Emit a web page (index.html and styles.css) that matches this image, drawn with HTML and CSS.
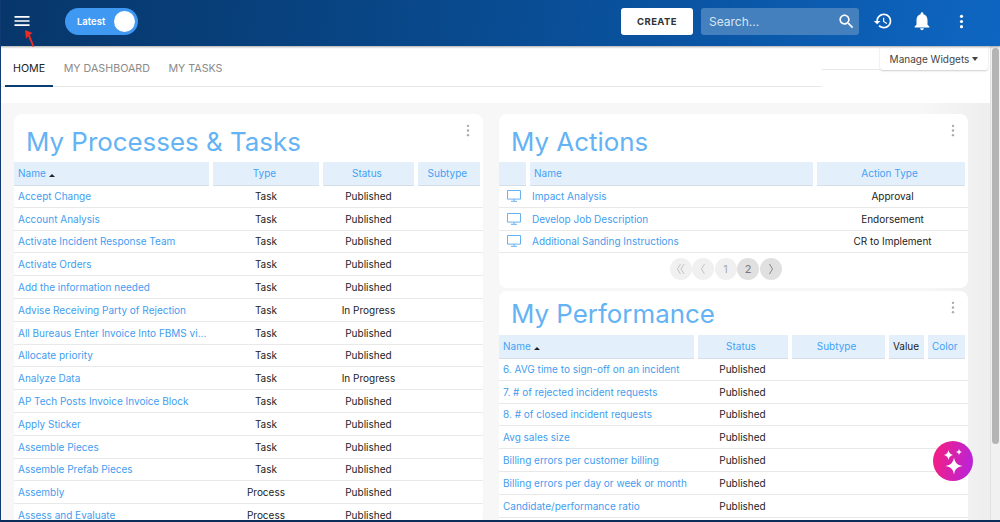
FILE: index.html
```html
<!DOCTYPE html>
<html lang="en">
<head>
<meta charset="utf-8">
<title>Home</title>
<link rel="stylesheet" href="styles.css">
</head>
<body>
<div class="frame">
  <header class="topbar">
    <svg class="icon menu" viewBox="0 0 24 24"><path d="M3 18h18v-2H3v2zm0-5h18v-2H3v2zm0-7v2h18V6H3z"/></svg>
    <div class="toggle"><span>Latest</span><i></i></div>
    <div class="spacer"></div>
    <button class="create">CREATE</button>
    <div class="search"><span>Search...</span><svg class="icon" viewBox="0 0 24 24"><path d="M15.5 14h-.79l-.28-.27C15.41 12.59 16 11.11 16 9.5 16 5.91 13.09 3 9.5 3S3 5.91 3 9.5 5.91 16 9.5 16c1.61 0 3.09-.59 4.23-1.57l.27.28v.79l5 4.99L20.49 19l-4.99-5zm-6 0C7.01 14 5 11.99 5 9.5S7.01 5 9.5 5 14 7.01 14 9.5 11.99 14 9.5 14z"/></svg></div>
    <svg class="icon history" viewBox="0 0 24 24"><path d="M13 3c-4.97 0-9 4.03-9 9H1l3.89 3.89.07.14L9 12H6c0-3.87 3.13-7 7-7s7 3.13 7 7-3.13 7-7 7c-1.93 0-3.68-.79-4.94-2.06l-1.42 1.42C8.27 19.99 10.51 21 13 21c4.97 0 9-4.03 9-9s-4.03-9-9-9zm-1 5v5l4.28 2.54.72-1.21-3.5-2.08V8H12z"/></svg>
    <svg class="icon bell" viewBox="0 0 24 24"><path d="M12 22c1.1 0 2-.9 2-2h-4c0 1.1.89 2 2 2zm6-6v-5c0-3.07-1.64-5.64-4.5-6.32V4c0-.83-.67-1.5-1.5-1.5s-1.5.67-1.5 1.5v.68C7.63 5.36 6 7.92 6 11v5l-2 2v1h16v-1l-2-2z"/></svg>
    <svg class="icon dots" viewBox="0 0 24 24"><circle cx="12" cy="5.5" r="2"/><circle cx="12" cy="12" r="2"/><circle cx="12" cy="18.5" r="2"/></svg>
  </header>
  <svg class="arrow" viewBox="0 0 13 18"><path d="M2 1l7.700 3-2.900 1.800L11.300 17.300l-1.500.7L5 7.100 3 10z"/></svg>
  <div class="main">
    <div class="content">
      <div class="tabsbar">
        <nav class="tabs">
          <a class="tab active">HOME</a>
          <a class="tab">MY DASHBOARD</a>
          <a class="tab">MY TASKS</a>
        </nav>
        <div class="manage">Manage Widgets<b></b></div>
      </div>
      <div class="widgets">
        <section class="card left">
          <svg class="kebab" viewBox="0 0 4 14"><circle cx="2" cy="2" r="1.3"/><circle cx="2" cy="7" r="1.3"/><circle cx="2" cy="12" r="1.3"/></svg>
          <h2>My Processes &amp; Tasks</h2>
          <div class="row head cols-proc"><div>Name<em></em></div><div class="c">Type</div><div class="c">Status</div><div class="c">Subtype</div></div>
          <div class="row cols-proc"><a>Accept Change</a><span class="c">Task</span><span class="c">Published</span></div>
          <div class="row cols-proc"><a>Account Analysis</a><span class="c">Task</span><span class="c">Published</span></div>
          <div class="row cols-proc"><a>Activate Incident Response Team</a><span class="c">Task</span><span class="c">Published</span></div>
          <div class="row cols-proc"><a>Activate Orders</a><span class="c">Task</span><span class="c">Published</span></div>
          <div class="row cols-proc"><a>Add the information needed</a><span class="c">Task</span><span class="c">Published</span></div>
          <div class="row cols-proc"><a>Advise Receiving Party of Rejection</a><span class="c">Task</span><span class="c">In Progress</span></div>
          <div class="row cols-proc"><a>All Bureaus Enter Invoice Into FBMS vi...</a><span class="c">Task</span><span class="c">Published</span></div>
          <div class="row cols-proc"><a>Allocate priority</a><span class="c">Task</span><span class="c">Published</span></div>
          <div class="row cols-proc"><a>Analyze Data</a><span class="c">Task</span><span class="c">In Progress</span></div>
          <div class="row cols-proc"><a>AP Tech Posts Invoice Invoice Block</a><span class="c">Task</span><span class="c">Published</span></div>
          <div class="row cols-proc"><a>Apply Sticker</a><span class="c">Task</span><span class="c">Published</span></div>
          <div class="row cols-proc"><a>Assemble Pieces</a><span class="c">Task</span><span class="c">Published</span></div>
          <div class="row cols-proc"><a>Assemble Prefab Pieces</a><span class="c">Task</span><span class="c">Published</span></div>
          <div class="row cols-proc"><a>Assembly</a><span class="c">Process</span><span class="c">Published</span></div>
          <div class="row cols-proc"><a>Assess and Evaluate</a><span class="c">Process</span><span class="c">Published</span></div>
        </section>
        <div class="stack">
          <section class="card actions">
            <svg class="kebab" viewBox="0 0 4 14"><circle cx="2" cy="2" r="1.3"/><circle cx="2" cy="7" r="1.3"/><circle cx="2" cy="12" r="1.3"/></svg>
            <h2>My Actions</h2>
            <div class="row head cols-act"><div></div><div>Name</div><div class="c">Action Type</div></div>
            <div class="row cols-act"><svg class="screen" viewBox="0 0 14 12"><path d="M.5.5h13v8.600H.5zM7 9.100v2M4 11.300h6"/></svg><a>Impact Analysis</a><span class="c">Approval</span></div>
            <div class="row cols-act"><svg class="screen" viewBox="0 0 14 12"><path d="M.5.5h13v8.600H.5zM7 9.100v2M4 11.300h6"/></svg><a>Develop Job Description</a><span class="c">Endorsement</span></div>
            <div class="row cols-act"><svg class="screen" viewBox="0 0 14 12"><path d="M.5.5h13v8.600H.5zM7 9.100v2M4 11.300h6"/></svg><a>Additional Sanding Instructions</a><span class="c">CR to Implement</span></div>
            <div class="pager">
              <span class="pg"><svg viewBox="0 0 10 12"><path d="M4.500 1 1.500 6l3 5M8 1 5 6l3 5"/></svg></span>
              <span class="pg"><svg viewBox="0 0 10 12"><path d="M6.500 1 3.500 6l3 5"/></svg></span>
              <span class="pg">1</span>
              <span class="pg on">2</span>
              <span class="pg on"><svg viewBox="0 0 10 12"><path d="M3.500 1 6.500 6l-3 5"/></svg></span>
            </div>
          </section>
          <section class="card perf">
            <svg class="kebab" viewBox="0 0 4 14"><circle cx="2" cy="2" r="1.3"/><circle cx="2" cy="7" r="1.3"/><circle cx="2" cy="12" r="1.3"/></svg>
            <h2>My Performance</h2>
            <div class="row head cols-perf"><div>Name<em></em></div><div class="c">Status</div><div class="c">Subtype</div><div class="c dark">Value</div><div class="c">Color</div></div>
            <div class="row cols-perf"><a>6. AVG time to sign-off on an incident</a><span class="c">Published</span></div>
            <div class="row cols-perf"><a>7. # of rejected incident requests</a><span class="c">Published</span></div>
            <div class="row cols-perf"><a>8. # of closed incident requests</a><span class="c">Published</span></div>
            <div class="row cols-perf"><a>Avg sales size</a><span class="c">Published</span></div>
            <div class="row cols-perf"><a>Billing errors per customer billing</a><span class="c">Published</span></div>
            <div class="row cols-perf"><a>Billing errors per day or week or month</a><span class="c">Published</span></div>
            <div class="row cols-perf"><a>Candidate/performance ratio</a><span class="c">Published</span></div>
          </section>
        </div>
      </div>
    </div>
    <div class="scrollbar"><i></i></div>
  </div>
  <button class="ai" aria-label="AI assistant"><svg viewBox="0 0 40 40"><path d="M21 16.500c.9 5 3 7.500 8.500 8.500-5.500 1-7.600 3.300-8.500 8.500-.9-5.200-3-7.500-8.500-8.500 5.500-1 7.600-3.500 8.500-8.500z"/><path d="M15.500 9c.6 3 1.700 4.300 4.500 5-2.800.7-3.900 2-4.500 5-.6-3-1.700-4.300-4.500-5 2.800-.7 3.900-2 4.500-5z"/><path d="M26 7.700c.3 2 1.100 2.800 3 3.300-1.900.5-2.700 1.300-3 3.300-.3-2-1.100-2.800-3-3.300 1.900-.5 2.700-1.300 3-3.300z"/></svg></button>
</div>
</body>
</html>
```

FILE: styles.css
```css
* { box-sizing: border-box; }
html, body { margin: 0; height: 100%; overflow: hidden; }
body { font-family: Inter, "Liberation Sans", sans-serif; font-size: 10px; color: #222; }
.frame { position: relative; height: 522px; border-left: 1px solid #123b73; border-bottom: 2px solid #0c2c5a; display: flex; flex-direction: column; overflow: hidden; background: #fff; }

.topbar { height: 46px; flex: none; margin-left: -1px; padding-bottom: 4px; display: flex; align-items: center; background: linear-gradient(100deg, #07366a 0%, #08427f 30%, #0a55a4 70%, #0e66c2 100%); box-shadow: 0 1px 2px rgba(0,0,0,.35); position: relative; z-index: 2; }
.icon { fill: #fff; width: 24px; height: 24px; flex: none; }
.menu { margin-left: 12px; width: 20px; height: 20px; }
.toggle { margin-left: 33px; width: 73px; height: 27px; border-radius: 14px; background: #3f98f2; display: flex; align-items: center; justify-content: space-between; padding: 0 3px 0 12px; color: #fff; font-size: 9.5px; font-weight: 600; }
.toggle i { width: 21px; height: 21px; border-radius: 50%; background: #fff; }
.spacer { flex: 1; }
.create { width: 72px; height: 27px; border: 0; border-radius: 3px; background: #fff; color: #333; font: 700 9.5px Inter, sans-serif; letter-spacing: .4px; }
.search { margin-left: 8px; width: 158px; height: 27px; border-radius: 3px; background: #4480bd; display: flex; align-items: center; justify-content: space-between; padding: 0 3px 0 8px; color: #d8e6f4; font-size: 12px; }
.search .icon { width: 19px; height: 19px; }
.history { margin-left: 14px; width: 20px; height: 20px; }
.bell { margin-left: 18px; width: 22px; height: 22px; }
.dots { margin-left: 18.500px; margin-right: 29.500px; width: 19px; height: 19px; }
.arrow { position: absolute; left: 22px; top: 29px; width: 13px; height: 18px; fill: #ee2a24; z-index: 3; }

.main { flex: 1; min-height: 0; display: flex; }
.content { flex: 1; min-width: 0; background: linear-gradient(90deg, #f7f7f7 0, #f7f7f7 93%, #eeeeee 100%); }
.tabsbar { height: 57px; background: #fff; position: relative; }
.tabs { width: 821px; height: 41px; padding-left: 4px; display: flex; gap: 2.500px; border-bottom: 1px solid #e8e8e8; }
.tab { height: 41px; padding: 16px 8px 0; font-size: 10.700px; color: #8a8a8a; }
.tab.active { color: #222; border-bottom: 2px solid #0b3d75; }
.manage { position: absolute; right: 2px; top: 1px; width: 108px; height: 23px; background: #fff; border-radius: 0 0 3px 3px; box-shadow: 0 1px 2px rgba(0,0,0,.2); display: flex; align-items: center; justify-content: center; gap: 3px; font-size: 10px; color: #444; }
.manage b { border: 3.500px solid transparent; border-top: 4px solid #444; border-bottom: 0; }
.tabsbar::after { content: ""; position: absolute; left: 821px; top: 23px; width: 60px; border-top: 1px solid #e8e8e8; }

.widgets { padding: 11px 0 0 13px; display: flex; gap: 16px; align-items: flex-start; }
.card { position: relative; width: 469px; background: #fff; border-radius: 8px; overflow: hidden; }
.card h2 { margin: 0; height: 48px; padding: 12px 0 0 12px; font-size: 25.900px; line-height: 32px; font-weight: 400; color: #64b3f4; }
.left { height: 410px; }
.stack { display: flex; flex-direction: column; gap: 3px; }
.actions { height: 174px; }
.perf { height: 240px; border-radius: 8px 8px 0 0; }
.perf h2 { height: 44px; padding-top: 7px; }
.kebab { position: absolute; right: 13px; top: 10px; width: 4px; height: 13px; fill: #aaa; }

.row { display: grid; column-gap: 4px; height: 22.800px; align-items: center; border-bottom: 1px solid #e9e9e9; white-space: nowrap; }
.row a { color: #3f9df0; padding-left: 4px; }
.row .c { text-align: center; }
.row.head { height: 23px; margin-right: 3px; border: 0; color: #43a1f3; align-items: stretch; }
.row.head > div { background: #e3f0fc; border-bottom: 1px solid #d5dee7; padding-left: 4px; line-height: 23px; }
.row.head > div.c { padding-left: 0; padding-right: 3px; }
.row.head em { display: inline-block; border: 3.500px solid transparent; border-bottom: 3.500px solid #222; border-top: 0; margin-left: 3px; vertical-align: 0; }
.row.head .dark { color: #222; }
.row.head > div.dark { padding-right: 0; }
.cols-proc { grid-template-columns: 194.700px 106.500px 90.500px 1fr; }
.cols-act { grid-template-columns: 27px 283px 1fr; }
.cols-act a { padding-left: 2px; }
.cols-perf { grid-template-columns: 194.500px 90px 93px 35px 1fr; }
.screen { width: 14px; height: 12px; margin-left: 8px; fill: none; stroke: #58a9ee; stroke-width: .9; }

.pager { display: flex; justify-content: center; gap: .5px; padding: 5px 16px 0 0; }
.pg { width: 22px; height: 22px; border-radius: 50%; background: #f0f0f0; color: #aaa; font-size: 11px; display: flex; align-items: center; justify-content: center; }
.pg svg { width: 10px; height: 12px; fill: none; stroke: #c4c4c4; stroke-width: 1; }
.pg.on { background: #e0e0e0; color: #777; }
.pg.on svg { stroke: #888; }

.scrollbar { width: 10px; flex: none; background: #f1f1f1; border-left: 1px solid #e2e2e2; padding: 2px 1px 0; }
.scrollbar i { display: block; width: 7px; height: 396px; border-radius: 4px; background: #b4b4b4; }

.ai { position: absolute; left: 932px; top: 441px; width: 40px; height: 40px; padding: 0; border: 0; border-radius: 50%; background: linear-gradient(100deg, #ee1f8a 15%, #b823dc 95%); }
.ai svg { display: block; fill: #fff; }
```
